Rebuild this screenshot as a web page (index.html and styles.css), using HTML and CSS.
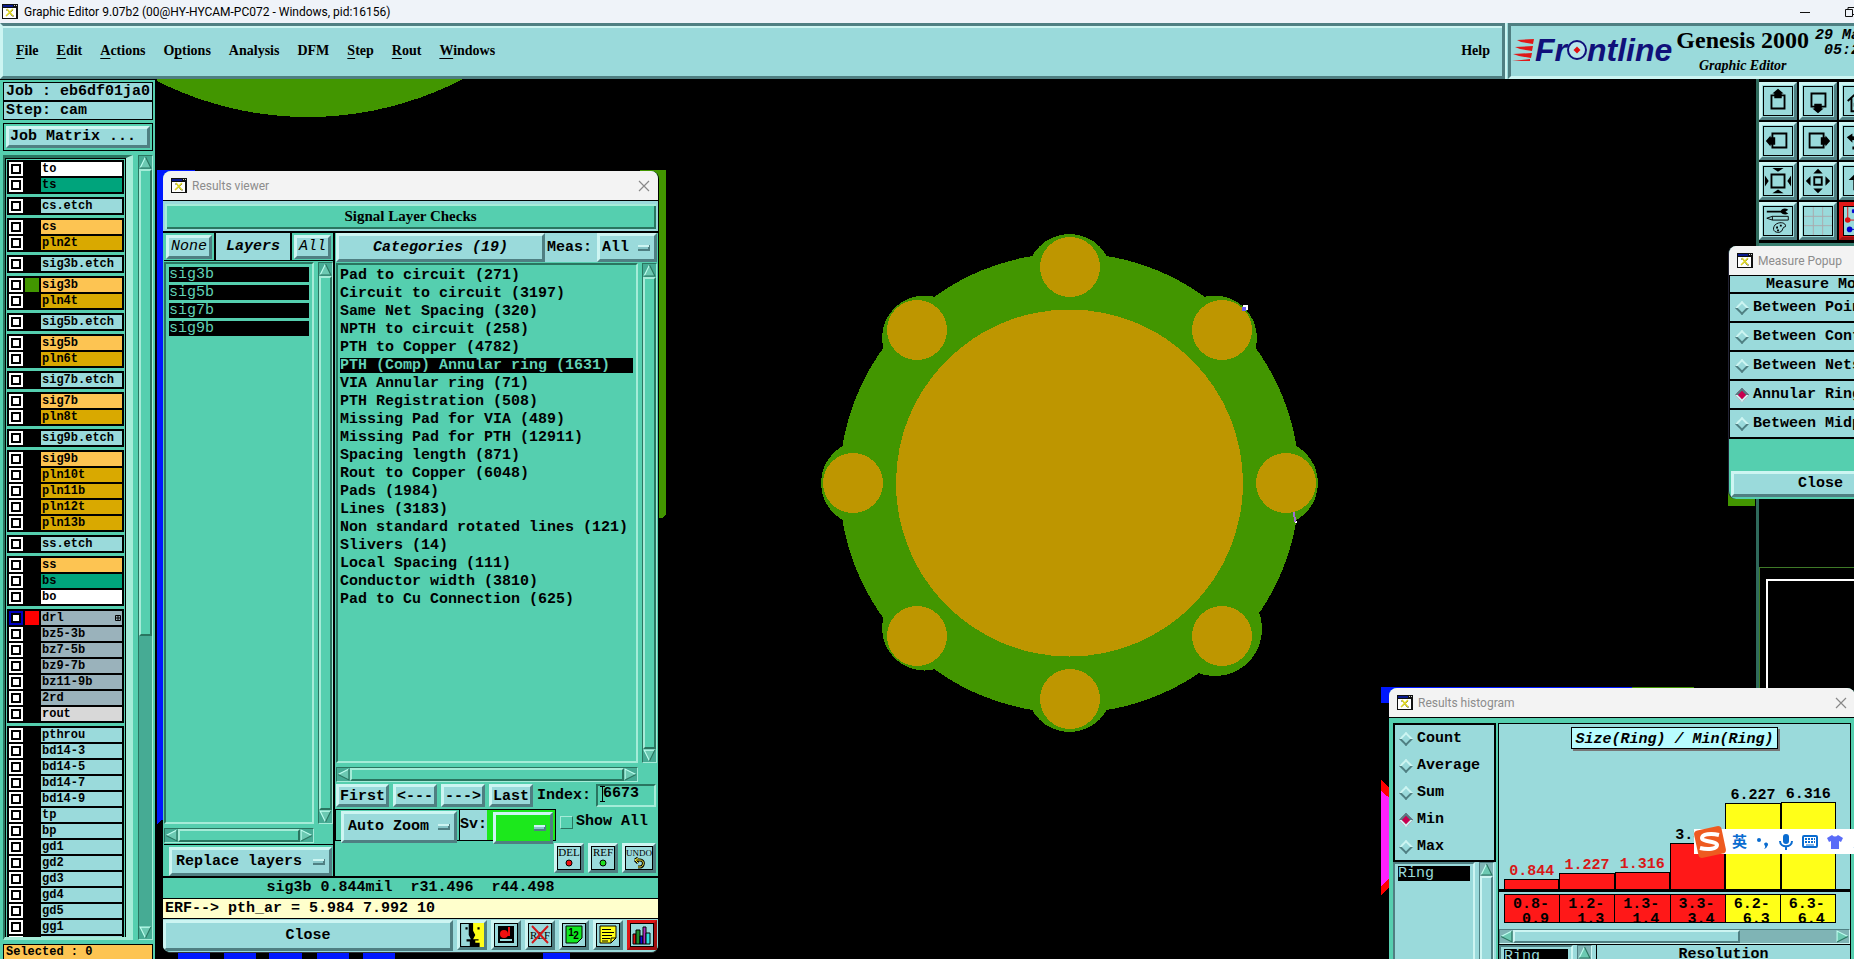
FILE: index.html
```html
<!DOCTYPE html>
<html lang="en">
<head>
<meta charset="utf-8">
<title>Graphic Editor 9.07b2</title>
<link rel="stylesheet" href="styles.css">
</head>
<body>
<svg width="0" height="0" class="defs" aria-hidden="true">
  <symbol id="app" viewBox="0 0 16 16"><path fill="#111" d="M0 0h16v15H0z"/><path fill="#0a1a8c" d="M1 1h10v2H1z"/><path fill="#fff" d="M1 4h13v10H1z"/><path fill="#ccc" d="M12 1h1v1h-1zM14 1h1v1h-1z"/><path d="M4 6h2l4 6h2M11 6L4 12" fill="none" stroke="#555" stroke-width="1"/><path d="M5 5l6 7M11 5L4 12" fill="none" stroke="#e0d820" stroke-width="1.5"/></symbol>
  <symbol id="close" viewBox="0 0 12 12"><path d="M1 1l10 10M11 1L1 11" fill="none" stroke="#888" stroke-width="1.2"/></symbol>
  <symbol id="up" viewBox="0 0 12 12"><path class="arr" d="M6 1L11 11H1z"/><path d="M6 1L1 11" stroke="#c0fff0"/><path d="M6 1l5 10H1" fill="none" stroke="#2a7560"/></symbol>
  <symbol id="down" viewBox="0 0 12 12"><path class="arr" d="M6 11L11 1H1z"/><path d="M6 11L1 1H11" fill="none" stroke="#c0fff0"/><path d="M6 11l5-10" stroke="#2a7560"/></symbol>
  <symbol id="left" viewBox="0 0 12 12"><path class="arr" d="M1 6L11 1V11z"/><path d="M1 6L11 1" stroke="#c0fff0"/><path d="M1 6l10 5V1" fill="none" stroke="#2a7560"/></symbol>
  <symbol id="right" viewBox="0 0 12 12"><path class="arr" d="M11 6L1 1V11z"/><path d="M11 6L1 1V11" fill="none" stroke="#c0fff0"/><path d="M11 6L1 11" stroke="#2a7560"/></symbol>
</svg>

<header class="titlebar">
  <svg class="appicon"><use href="#app"/></svg>
  <h1>Graphic Editor 9.07b2 (00@HY-HYCAM-PC072 - Windows, pid:16156)</h1>
  <button class="sys" aria-label="Minimize"><svg width="12" height="12"><path d="M1 6.500h10" stroke="#111"/></svg></button>
  <button class="sys restore" aria-label="Restore"><svg width="12" height="12"><path d="M1.500 3.500h7v7h-7zM4 3V1.500h7v7H9" fill="none" stroke="#111"/></svg></button>
</header>

<div class="top">
  <nav class="menubar">
    <button><u>F</u>ile</button><button><u>E</u>dit</button><button><u>A</u>ctions</button><button>O<u>p</u>tions</button><button>Analysis</button><button>DFM</button><button><u>S</u>tep</button><button><u>R</u>out</button><button><u>W</u>indows</button>
    <button class="help">Help</button>
  </nav>
  <section class="brand">
    <div class="logo">
      <svg width="23" height="24"><path fill="#e01818" d="M5 2l17-1-1 5-12-2zM3 9l18-1-1 5L8 11zM1 16l19-1-1 5L7 18zM0 23l18-2v2z"/></svg><span>Fr</span><svg width="20" height="20"><circle cx="10" cy="10" r="9" fill="#b8e6ea" stroke="#10107a" stroke-width="2"/><path d="M10 6.500l3.500 3.500-3.500 3.500L6.500 10z" fill="#e01010"/></svg><span>ntline</span>
    </div>
    <div class="product"><strong>Genesis 2000</strong><em>Graphic Editor</em></div>
    <div class="clock">29 Mar<br>05:24</div>
  </section>
</div>

<main class="work">
  <aside class="sidebar">
    <div class="info">Job : eb6df01ja0</div>
    <div class="info">Step: cam</div>
    <div class="matrix"><button class="btn">Job Matrix ...</button></div>
    <div class="layerbox">
      <div class="well">
        <div class="stack">
          <div class="group">
            <label class="layer white"><input type="checkbox"><i></i><span>to</span></label>
            <label class="layer green"><input type="checkbox"><i></i><span>ts</span></label>
          </div>
          <div class="group"><label class="layer"><input type="checkbox"><i></i><span>cs.etch</span></label></div>
          <div class="group">
            <label class="layer amber"><input type="checkbox"><i></i><span>cs</span></label>
            <label class="layer gold"><input type="checkbox"><i></i><span>pln2t</span></label>
          </div>
          <div class="group"><label class="layer"><input type="checkbox"><i></i><span>sig3b.etch</span></label></div>
          <div class="group">
            <label class="layer amber"><input type="checkbox"><i class="shown"></i><span>sig3b</span></label>
            <label class="layer gold"><input type="checkbox"><i></i><span>pln4t</span></label>
          </div>
          <div class="group"><label class="layer"><input type="checkbox"><i></i><span>sig5b.etch</span></label></div>
          <div class="group">
            <label class="layer amber"><input type="checkbox"><i></i><span>sig5b</span></label>
            <label class="layer gold"><input type="checkbox"><i></i><span>pln6t</span></label>
          </div>
          <div class="group"><label class="layer"><input type="checkbox"><i></i><span>sig7b.etch</span></label></div>
          <div class="group">
            <label class="layer amber"><input type="checkbox"><i></i><span>sig7b</span></label>
            <label class="layer gold"><input type="checkbox"><i></i><span>pln8t</span></label>
          </div>
          <div class="group"><label class="layer"><input type="checkbox"><i></i><span>sig9b.etch</span></label></div>
          <div class="group">
            <label class="layer amber"><input type="checkbox"><i></i><span>sig9b</span></label>
            <label class="layer gold"><input type="checkbox"><i></i><span>pln10t</span></label>
            <label class="layer gold"><input type="checkbox"><i></i><span>pln11b</span></label>
            <label class="layer gold"><input type="checkbox"><i></i><span>pln12t</span></label>
            <label class="layer gold"><input type="checkbox"><i></i><span>pln13b</span></label>
          </div>
          <div class="group"><label class="layer"><input type="checkbox"><i></i><span>ss.etch</span></label></div>
          <div class="group">
            <label class="layer amber"><input type="checkbox"><i></i><span>ss</span></label>
            <label class="layer green"><input type="checkbox"><i></i><span>bs</span></label>
            <label class="layer white"><input type="checkbox"><i></i><span>bo</span></label>
          </div>
          <div class="group">
            <label class="layer slate work-layer"><input type="checkbox"><i class="drill"></i><span>drl<svg width="6" height="6"><path d="M.5.5h5v5h-5zM3 0v6M0 3h6" fill="none" stroke="#000"/></svg></span></label>
            <label class="layer slate"><input type="checkbox"><i></i><span>bz5-3b</span></label>
            <label class="layer slate"><input type="checkbox"><i></i><span>bz7-5b</span></label>
            <label class="layer slate"><input type="checkbox"><i></i><span>bz9-7b</span></label>
            <label class="layer slate"><input type="checkbox"><i></i><span>bz11-9b</span></label>
            <label class="layer slate"><input type="checkbox"><i></i><span>2rd</span></label>
            <label class="layer grey"><input type="checkbox"><i></i><span>rout</span></label>
          </div>
          <div class="group">
            <label class="layer"><input type="checkbox"><i></i><span>pthrou</span></label>
            <label class="layer"><input type="checkbox"><i></i><span>bd14-3</span></label>
            <label class="layer"><input type="checkbox"><i></i><span>bd14-5</span></label>
            <label class="layer"><input type="checkbox"><i></i><span>bd14-7</span></label>
            <label class="layer"><input type="checkbox"><i></i><span>bd14-9</span></label>
            <label class="layer"><input type="checkbox"><i></i><span>tp</span></label>
            <label class="layer"><input type="checkbox"><i></i><span>bp</span></label>
            <label class="layer"><input type="checkbox"><i></i><span>gd1</span></label>
            <label class="layer"><input type="checkbox"><i></i><span>gd2</span></label>
            <label class="layer"><input type="checkbox"><i></i><span>gd3</span></label>
            <label class="layer"><input type="checkbox"><i></i><span>gd4</span></label>
            <label class="layer"><input type="checkbox"><i></i><span>gd5</span></label>
            <label class="layer"><input type="checkbox"><i></i><span>gg1</span></label>
            <label class="layer"><input type="checkbox"><i></i><span>gg2</span></label>
          </div>
        </div>
      </div>
      <div class="vscroll partial"><svg><use href="#up"/></svg><b></b><s></s><svg><use href="#down"/></svg></div>
    </div>
    <div class="selected">Selected : 0</div>
  </aside>

  <section class="canvas" aria-label="Board view">
    <svg width="1599" height="880" shape-rendering="crispEdges">
      <g transform="translate(-157 -79)">
        <circle cx="308" cy="-218" r="335" fill="#429600"/>
        <path fill="#0018ff" d="M157 170h38v650h-34l-4 4zM178 950h32v9h-32zM224 950h32v9h-32zM269 950h33v9h-33zM317 950h32v9h-32zM363 950h32v9h-32zM543 950h27v9h-27zM1381 687h251v16h-251z"/>
        <path fill="#429600" d="M640 170h26v344l-4 4h-22zM1728 480h27v26h-27zM1632 687h62v5h-62z"/>
        <path fill="#f00" d="M1381 780l12 12v91l-12 12z"/><path fill="#ff20ff" d="M1381 791l12 10v73l-12 12z"/>
        <g fill="#429600">
          <circle cx="1069.500" cy="483" r="230"/>
          <circle cx="1069.500" cy="276.500" r="42.500"/><circle cx="1069.500" cy="689.500" r="42.500"/><circle cx="863.500" cy="483" r="42.500"/><circle cx="1275.500" cy="483" r="42.500"/>
          <circle cx="924.500" cy="338" r="42.500"/><circle cx="1214.500" cy="338" r="42.500"/><circle cx="924.500" cy="628" r="42.500"/><circle cx="1215" cy="629" r="47"/>
        </g>
        <g fill="#be9600">
          <circle cx="1069.500" cy="483" r="173.500"/>
          <circle cx="1070" cy="267" r="30"/><circle cx="1070" cy="699" r="30"/><circle cx="853" cy="483" r="30"/><circle cx="1286" cy="483" r="30"/>
          <circle cx="917" cy="330" r="30"/><circle cx="1222" cy="330" r="30"/><circle cx="917" cy="636" r="30"/><circle cx="1222" cy="636" r="30"/>
        </g>
        <path d="M1243 305h5v5h-5zM1295 521h2v2h-2z" fill="#fff"/><path d="M1242 307h4v4h-4z" fill="#6a5cf0"/><path d="M1293.500 512l2 10" stroke="#a070d0" stroke-width="2"/>
      </g>
    </svg>
  </section>

  <aside class="tools">
    <div class="toolgrid">
      <button aria-label="Pan up"><svg viewBox="0 0 30 30"><path d="M8 9h14v14H8z" class="ln"/><path d="M15 2l6 5h-2v5h-8V7H9z"/></svg></button>
      <button aria-label="Pan down"><svg viewBox="0 0 30 30"><path d="M8 7h15v14H8z" class="ln"/><path d="M15 28l6-5h-2v-5h-8v5H9z"/></svg></button>
      <button aria-label="Home"><svg viewBox="0 0 30 30"><path d="M4 15L15 5l11 10M8 12v14h14V12" class="ln"/><path d="M11 17h5v4h-5z" fill="none" stroke="#000"/></svg></button>
      <button aria-label="Pan left"><svg viewBox="0 0 30 30"><path d="M9 7h15v15H9z" class="ln"/><path d="M2 15l5-6v2h5v8H7v2z"/></svg></button>
      <button aria-label="Pan right"><svg viewBox="0 0 30 30"><path d="M6 7h15v15H6z" class="ln"/><path d="M28 15l-5-6v2h-5v8h5v2z"/></svg></button>
      <button aria-label="Previous view"><svg viewBox="0 0 30 30"><path d="M3 11l6-4v3c9 0 12 4 10 14H9v-3h6c1-5-1-7-6-7v3z"/></svg></button>
      <button aria-label="Zoom in"><svg viewBox="0 0 30 30"><path d="M8 8h14v14H8z" class="ln"/><path d="M9 1h12l-6 4zM9 28h12l-6-4zM1 9v12l4-6zM29 9v12l-4-6z"/></svg></button>
      <button aria-label="Zoom out"><svg viewBox="0 0 30 30"><path d="M11 11h8v8h-8z" class="ln"/><path d="M10 7h10l-5-5zM10 23h10l-5 5zM7 10v10l-5-5zM23 10v10l5-5z"/></svg></button>
      <button aria-label="Back"><svg viewBox="0 0 30 30"><path d="M5 14l7-7 7 7h-5v11h-4V14z"/></svg></button>
      <button aria-label="Options"><svg viewBox="0 0 30 30"><path d="M3 4h15c2-3 5-3 8-1l-3 2 3 2c-3 2-6 1-8-1H3z"/><path d="M3 12l6-2h17v4H9zM9 10v4M12 19c5-4 12-2 11 2-4 0-2 5-6 6-6 1-9-3-5-8z" fill="none" stroke="#000"/><path d="M13 21h2v2h-2zM17 19h2v2h-2zM14 24h2v2h-2z"/></svg></button>
      <button aria-label="Grid"><svg viewBox="0 0 30 30"><path d="M10 0v30M20 0v30M0 10h30M0 20h30" stroke="#a9a9ad"/></svg></button>
      <button aria-label="Measure" class="active"><svg viewBox="0 0 30 30"><path d="M4 0v14h26" fill="none" stroke="#e01010"/><circle cx="4" cy="14" r="3" fill="#e01010"/><circle cx="6" cy="24" r="3" fill="#0000d0"/><path d="M9 3h4v3H9zM8 24h22" fill="#0000d0" stroke="#0000d0"/></svg></button>
    </div>
    <div class="panview"><div></div></div>
  </aside>

  <section class="window viewer">
    <div class="wintitle"><svg class="appicon"><use href="#app"/></svg><h2>Results viewer</h2><button aria-label="Close window"><svg width="12" height="12"><use href="#close"/></svg></button></div>
    <div class="heading">Signal Layer Checks</div>
    <div class="cols">
      <div class="layercol">
        <div class="pick"><div><button class="btn it">None</button></div><h3>Layers</h3><div><button class="btn it">All</button></div></div>
        <div class="scrollarea">
          <ul class="list"><li class="on">sig3b</li><li class="on">sig5b</li><li class="on">sig7b</li><li class="on">sig9b</li></ul>
          <div class="vscroll"><svg><use href="#up"/></svg><b></b><svg><use href="#down"/></svg></div>
          <div class="hscroll"><svg><use href="#left"/></svg><b></b><svg><use href="#right"/></svg></div>
        </div>
        <div class="replace"><select class="btn" aria-label="Layer action"><option>Replace layers</option></select></div>
      </div>
      <div class="catcol">
        <div class="cathead"><button class="btn it">Categories (19)</button><label for="meas">Meas:</label><select id="meas" class="btn"><option>All</option></select></div>
        <div class="scrollarea">
          <ul class="list"><li>Pad to circuit (271)</li><li>Circuit to circuit (3197)</li><li>Same Net Spacing (320)</li><li>NPTH to circuit (258)</li><li>PTH to Copper (4782)</li><li class="on">PTH (Comp) Annular ring (1631)</li><li>VIA Annular ring (71)</li><li>PTH Registration (508)</li><li>Missing Pad for VIA (489)</li><li>Missing Pad for PTH (12911)</li><li>Spacing length (871)</li><li>Rout to Copper (6048)</li><li>Pads (1984)</li><li>Lines (3183)</li><li>Non standard rotated lines (121)</li><li>Slivers (14)</li><li>Local Spacing (111)</li><li>Conductor width (3810)</li><li>Pad to Cu Connection (625)</li></ul>
          <div class="vscroll"><svg><use href="#up"/></svg><b></b><svg><use href="#down"/></svg></div>
          <div class="hscroll"><svg><use href="#left"/></svg><b></b><svg><use href="#right"/></svg></div>
        </div>
        <div class="step"><button class="btn">First</button><button class="btn">&lt;---</button><button class="btn">---&gt;</button><button class="btn">Last</button><label for="idx">Index:</label><input id="idx" type="text" value="6673" size="4"><svg class="ibeam" width="7" height="16"><path d="M1 .5h5M1 15.500h5M3.500 1v14" stroke="#000"/></svg></div>
        <div class="zoomrow"><div class="boxed"><select class="btn" aria-label="Zoom mode"><option>Auto Zoom</option></select></div><div class="sv"><label for="sv">Sv:</label><div><select id="sv" class="btn"><option></option></select></div></div><label class="showall"><input type="checkbox">Show All</label></div>
        <div class="acts">
          <button class="btn icon"><svg class="frame" viewBox="0 0 22 22"><text x="11" y="9">DEL</text><circle cx="11" cy="16" r="3" fill="#f01010" stroke="#000"/></svg></button>
          <button class="btn icon"><svg class="frame" viewBox="0 0 22 22"><text x="11" y="9">REF</text><circle cx="11" cy="16" r="3" fill="#20e020" stroke="#000"/></svg></button>
          <button class="btn icon wide"><svg class="frame" viewBox="0 0 26 22"><text x="13" y="9" class="small">UNDO</text><path d="M9 13h5c5 0 4 7 0 7h-2M9 13l3-2M9 13l3 3" fill="none" stroke="#000" stroke-width="3"/><path d="M9 13h5c5 0 4 7 0 7h-2M9 13l3-2M9 13l3 3" fill="none" stroke="#f8f040"/></svg></button>
        </div>
      </div>
    </div>
    <output class="status">sig3b 0.844mil&nbsp; r31.496&nbsp; r44.498</output>
    <output class="erf">ERF--&gt; pth_ar = 5.984 7.992 10</output>
    <div class="closing">
      <button class="btn">Close</button>
      <button class="btn icon" aria-label="Negative view"><svg viewBox="0 0 22 22"><path d="M0 0h22v22H0z"/><path d="M1 1h7v10l2 4H6v2h3v4H1z" fill="#9adada"/><path d="M12 0h10v22h-4v-4h-4v-2h3v-1h-5l2-4-2-4z" fill="#ffff18"/><path d="M5 4h2v2H5zM16 4h2v2h-2z"/></svg></button>
      <button class="btn icon" aria-label="Snapshot"><svg class="frame" viewBox="0 0 22 22"><path d="M3 2h16v17H3z"/><circle cx="9" cy="10" r="4" fill="#f01010"/><path d="M14 3v8h-4" fill="none" stroke="#f01010" stroke-width="2"/><path d="M5 16h12" stroke="#9adada" stroke-width="2"/></svg></button>
      <button class="btn icon" aria-label="Clear reference"><svg class="frame" viewBox="0 0 22 22"><text x="11" y="15">REF</text><path d="M3 2l16 17M19 2L3 19" stroke="#d01818" stroke-width="2"/></svg></button>
      <button class="btn icon" aria-label="Count"><svg class="frame" viewBox="0 0 22 22"><path d="M3 2h16v12l-5 5H3z" fill="#10e820" stroke="#000"/><text x="8" y="12" class="num">1</text><text x="13" y="15" class="num">2</text></svg></button>
      <button class="btn icon" aria-label="Notes"><svg class="frame" viewBox="0 0 22 22"><path d="M3 2h16v12l-5 5H3z" fill="#ffff18" stroke="#000"/><path d="M5 5.500h9M5 8.500h12M5 11.500h10M5 14.500h8M14 19v-5h5M5 17h6" fill="none" stroke="#000"/></svg></button>
      <button class="btn icon active" aria-label="Histogram"><svg class="frame" viewBox="0 0 22 22"><g stroke="#000"><path d="M2 10h3v10H2z" fill="#e01010"/><path d="M5 6h4v14H5z" fill="#209030"/><path d="M9 12h3v8H9z" fill="#1010e0"/><path d="M12 3h3v17h-3z" fill="#b030c0"/><path d="M15 9h4v11h-4z" fill="#30e0e0"/></g></svg></button>
    </div>
  </section>

  <section class="window popup">
    <div class="wintitle"><svg class="appicon"><use href="#app"/></svg><h2>Measure Popup</h2></div>
    <fieldset>
      <legend>Measure Mode</legend>
      <label><input type="radio" name="mm">Between Points</label>
      <label><input type="radio" name="mm">Between Contours</label>
      <label><input type="radio" name="mm">Between Nets</label>
      <label><input type="radio" name="mm" checked>Annular Ring</label>
      <label><input type="radio" name="mm">Between Midpoints</label>
    </fieldset>
    <div class="popclose"><button class="btn">Close</button></div>
  </section>

  <section class="window histo">
    <div class="wintitle"><svg class="appicon"><use href="#app"/></svg><h2>Results histogram</h2><button aria-label="Close window"><svg width="12" height="12"><use href="#close"/></svg></button></div>
    <div class="histobody">
      <div class="histoleft">
        <div class="stats">
          <label><input type="radio" name="st">Count</label><label><input type="radio" name="st">Average</label><label><input type="radio" name="st">Sum</label><label><input type="radio" name="st" checked>Min</label><label><input type="radio" name="st">Max</label>
        </div>
        <div class="ringbox"><ul class="list blue"><li class="on">Ring</li></ul><div class="vscroll blue"><svg><use href="#up"/></svg><b></b></div></div>
      </div>
      <div class="historight">
        <div class="chart">
          <h3>Size(Ring) / Min(Ring)</h3>
          <div class="bars">
            <div class="bar red"><span>0.844</span><b style="height:10px"></b></div>
            <div class="bar red"><span>1.227</span><b style="height:16px"></b></div>
            <div class="bar red"><span>1.316</span><b style="height:17px"></b></div>
            <div class="bar red over"><span>3.334</span><b style="height:46px"></b></div>
            <div class="bar yellow"><span>6.227</span><b style="height:86px"></b></div>
            <div class="bar yellow"><span>6.316</span><b style="height:87px"></b></div>
          </div>
          <div class="ranges"><div>0.8-<br>&nbsp;0.9</div><div>1.2-<br>&nbsp;1.3</div><div>1.3-<br>&nbsp;1.4</div><div>3.3-<br>&nbsp;3.4</div><div class="y">6.2-<br>&nbsp;6.3</div><div class="y">6.3-<br>&nbsp;6.4</div></div>
        </div>
        <div class="hscroll blue"><svg><use href="#left"/></svg><b></b><s></s><svg><use href="#right"/></svg></div>
        <div class="lower"><ul class="list blue"><li class="on">Ring</li></ul><div class="vscroll blue"><svg><use href="#up"/></svg><b></b></div><div class="res">Resolution</div></div>
      </div>
    </div>
  </section>

  <div class="ime">
    <svg class="sogou" width="32" height="32" viewBox="0 0 32 32"><rect x="2" y="2" width="28" height="28" rx="4" fill="#ee5a20" transform="rotate(-12 16 16)"/><path d="M25 9C17 7 8 8 8 12s15 3 15 7-9 5-17 3" fill="none" stroke="#fff" stroke-width="4"/></svg>
    <span>英</span>
    <svg width="14" height="14"><circle cx="3" cy="5" r="2" fill="#0a6cd0"/><path d="M8 9a2 2 0 1 1 4 1q-1 3-4 4 2-2 1-3z" fill="#0a6cd0"/></svg>
    <svg width="14" height="16"><rect x="4" y="0" width="6" height="10" rx="3" fill="#0a6cd0"/><path d="M1 7c0 7 12 7 12 0M7 12v4" fill="none" stroke="#0a6cd0" stroke-width="2"/></svg>
    <svg width="16" height="14"><rect x="1" y="1" width="14" height="11" rx="1" fill="none" stroke="#0a6cd0" stroke-width="2"/><path d="M3 4h10M3 7h10" stroke="#0a6cd0" stroke-width="2" stroke-dasharray="2 1"/><path d="M4 10h8" stroke="#0a6cd0"/></svg>
    <svg width="16" height="16"><path d="M5 1q3 3 6 0l5 3-2 4-2-1v8H4V7L2 8 0 4z" fill="#5a6cf8"/></svg>
    <svg width="12" height="14"><path d="M12 1H7Q3 1 3 4t5 3q4 1 3 4t-9 1" fill="none" stroke="#0a6cd0" stroke-width="2"/></svg>
  </div>
</main>
</body>
</html>
```
FILE: styles.css
```css
:root {
  --sky: #9adadb;
  --sky-lt: #cdf5f2;
  --sky-dk: #4f7f82;
  --teal: #55cfaf;
  --teal-lt: #a5ecd8;
  --teal-dk: #2a7560;
}
* { box-sizing: border-box; }
body {
  margin: 0;
  height: 100vh;
  display: flex;
  flex-direction: column;
  overflow: hidden;
  background: #000;
  color: #000;
  font: bold 15px/18px "Liberation Mono", monospace;
}
button, select, input { font: inherit; color: inherit; margin: 0; padding: 0; border-radius: 0; }
button { background: none; border: 0; white-space: nowrap; }
h1, h2, h3, ul, fieldset { margin: 0; padding: 0; font: inherit; }
ul { list-style: none; }
svg { display: block; flex: none; }
.defs { position: absolute; }
.arr { fill: #6cc9b2; }
.appicon { width: 16px; height: 16px; }

.btn {
  background: var(--sky);
  border: 3px solid;
  border-color: var(--sky-lt) var(--sky-dk) var(--sky-dk) var(--sky-lt);
}
.it { font-style: italic; }
select.btn {
  appearance: none;
  padding: 0 24px 0 4px;
  background-image:
    linear-gradient(var(--sky-lt), var(--sky-lt)),
    linear-gradient(#86c6c8, #86c6c8),
    linear-gradient(var(--sky-dk), var(--sky-dk));
  background-size: 11px 2px, 10px 2px, 12px 6px;
  background-position: right 5px top calc(50% - 2px), right 6px center, right 4px center;
  background-repeat: no-repeat;
}

.titlebar {
  flex: none;
  height: 23px;
  display: flex;
  align-items: center;
  gap: 6px;
  padding-left: 2px;
  background: #eff3f9;
  overflow: hidden;
}
.titlebar h1 { flex: 1; font: 12px/20px Roboto, sans-serif; }
.sys { width: 39px; flex: none; }
.restore { width: 12px; margin-right: -2px; }

.top { flex: none; display: flex; height: 56px; background: var(--sky); }
.menubar {
  flex: 1;
  display: flex;
  align-items: center;
  gap: 18px;
  padding: 0 12px 0 13px;
  border: 3px solid;
  border-color: var(--sky-dk) var(--sky-dk) var(--sky-dk) var(--sky-lt);
  box-shadow: inset 0 2px var(--sky-lt), 2px 0 var(--sky-lt);
  font: bold 14px/18px "Liberation Serif", serif;
}
.menubar u { text-underline-offset: 3px; }
.help { margin-left: auto; }
.brand {
  flex: none;
  width: 346px;
  margin-left: 3px;
  display: flex;
  overflow: hidden;
  border-left: 3px solid var(--sky-dk);
  border-top: 3px solid var(--sky-dk);
  border-bottom: 3px solid var(--sky-lt);
}
.logo {
  display: flex;
  align-items: center;
  height: 48px;
  font: italic bold 32px/32px "Liberation Sans", sans-serif;
  color: #10107a;
  padding-left: 1px;
}
.product { display: flex; flex-direction: column; align-items: center; padding-left: 4px; white-space: nowrap; }
.product strong { font: bold 24px/28px "Liberation Serif", serif; }
.product em { font: italic bold 14px/24px "Liberation Serif", serif; }
.clock { flex: none; font-style: italic; line-height: 15px; text-align: right; padding: 2px 0 0 6px; }

.work { flex: 1; min-height: 0; display: flex; }
.sidebar {
  flex: none;
  width: 155px;
  display: flex;
  flex-direction: column;
  padding: 2px 2px 0 3px;
  background: var(--teal);
  border-top: 1px solid #000;
}
.info { height: 19px; border: 1px solid #000; background: var(--sky); padding-left: 2px; line-height: 17px; white-space: nowrap; }
.matrix { border: 1px solid #000; margin-top: 3px; padding: 2px; display: grid; }
.matrix .btn { text-align: left; line-height: 16px; padding-left: 1px; }
.layerbox { flex: 1; min-height: 0; display: flex; gap: 5px; margin-top: 4px; }
.well {
  flex: 1;
  overflow: hidden;
  border: 4px solid;
  border-width: 3px 7px 3px 2px;
  border-color: var(--teal-dk) var(--teal-lt) var(--teal-lt) var(--teal-dk);
}
.stack { display: flex; flex-direction: column; gap: 3px; border: 1px solid #000; border-bottom: 0; padding: 1px 1px 0; }
.group { background: #000; padding: 2px; display: grid; gap: 2px; }
.layer { display: grid; grid-template-columns: 14px 14px 1fr; gap: 2px; height: 14px; }
.layer input, .showall input { appearance: none; }
.layer input { width: 14px; height: 14px; background: #fff; border: 2px solid #fff; box-shadow: inset 0 0 0 2px #000; }
.work-layer input { border-color: #0000c0; }
.layer span { display: flex; justify-content: space-between; align-items: center; padding: 0 1px; font-size: 12px; line-height: 14px; background: var(--sky); }
.layer.white span { background: #fff; }
.layer.green span { background: #00a47c; }
.layer.amber span { background: #fdc452; }
.layer.gold span { background: #d9a900; }
.layer.slate span { background: #9ab2bb; }
.layer.grey span { background: #d8d8d8; }
.shown { background: #429600; }
.drill { background: #f00; }
.selected { height: 15px; margin-top: 4px; border: 1px solid #000; border-bottom: 0; background: #fdc452; font-size: 12px; line-height: 14px; padding-left: 2px; }

.vscroll, .hscroll { display: flex; background: #46ab94; border: 1px solid; border-color: var(--teal-dk) var(--teal-lt) var(--teal-lt) var(--teal-dk); }
.vscroll { width: 15px; flex: none; flex-direction: column; }
.hscroll { height: 15px; flex: none; }
.vscroll svg, .hscroll svg { width: 13px; height: 13px; }
.vscroll b, .hscroll b { flex: 1; background: var(--teal); border: 2px solid; border-color: var(--teal-lt) var(--teal-dk) var(--teal-dk) var(--teal-lt); }
.partial b { flex: 468; }
.partial s { flex: 293; }

.canvas { flex: 1; min-width: 0; margin-left: 2px; overflow: hidden; }
.tools { flex: none; width: 98px; border-left: 3px solid #2f6a5c; overflow: hidden; display: flex; flex-direction: column; }
.toolgrid { display: grid; grid-template-columns: repeat(3, 38px); gap: 2px; padding-top: 3px; border-bottom: 3px solid #3a8072; padding-bottom: 3px; }
.toolgrid button { height: 38px; padding: 1px; background: var(--sky); border: 3px solid; border-color: var(--sky-lt) var(--sky-dk) var(--sky-dk) var(--sky-lt); }
.toolgrid svg { width: 30px; height: 30px; border: 1px solid #000; }
.toolgrid .active, .icon.active { background: #e01818; border-color: #e01818 #a01010 #a01010 #e01818; }
.toolgrid .active svg { background: var(--sky); }
.ln { fill: none; stroke: #000; stroke-width: 2; }
.panview { flex: 1; margin-top: 321px; border-top: 1px solid #3f7a28; border-left: 1px solid #3f7a28; padding: 11px 0 0 6px; }
.panview div { height: 100%; border: 2px solid #fff; border-width: 2px 0 0 2px; }

.window { position: absolute; display: flex; flex-direction: column; border-radius: 8px; overflow: hidden; background: var(--teal); }
.wintitle { flex: none; height: 30px; display: flex; align-items: center; gap: 5px; padding: 0 8px; background: #f3f3f3; border-bottom: 1px solid #000; }
.wintitle h2 { flex: 1; font: 12px/18px Roboto, sans-serif; color: #8c8c8c; white-space: nowrap; }

.viewer { left: 163px; top: 171px; width: 496px; height: 782px; border-bottom: 1px solid #333; border-right: 1px solid #000; }
.heading { flex: none; height: 30px; border: 3px solid var(--sky); border-width: 3px 2px 2px 2px; box-shadow: inset 2px 2px var(--teal-lt), inset -2px -2px var(--teal-dk); text-align: center; font: bold 15px/24px "Liberation Serif", serif; }
.cols { flex: 1; min-height: 0; display: flex; gap: 2px; background: #000; border: 1px solid #000; border-width: 2px 0; }
.layercol, .catcol { background: var(--teal); display: flex; flex-direction: column; padding-left: 1px; min-width: 0; }
.layercol { flex: none; width: 170px; }
.catcol { flex: 1; padding-right: 1px; }
.pick { display: flex; height: 28px; border-bottom: 1px solid #000; }
.pick > div { padding: 2px; display: grid; }
.pick .btn { padding: 0 2px; font-weight: normal; }
.pick h3 { flex: 1; text-align: center; background: var(--sky); border: 1px solid #000; border-width: 0 2px; font-style: italic; line-height: 27px; }
.scrollarea { flex: 1; min-height: 0; display: grid; grid-template: 1fr 15px / 1fr 15px; gap: 4px; padding: 1px 0; }
.list { border: 2px solid; border-color: var(--teal-dk) var(--teal-lt) var(--teal-lt) var(--teal-dk); padding: 3px; display: flex; flex-direction: column; gap: 3px; min-width: 0; }
.list li { line-height: 15px; height: 15px; white-space: nowrap; }
.list .on { background: #000; color: #62d2b6; }
.catcol .list { padding-left: 2px; }
.layercol .list .on { font-weight: normal; }
.replace { border-top: 1px solid #000; padding: 2px 1px 0 5px; height: 32px; display: grid; }

.cathead { display: flex; height: 29px; background: var(--sky); }
.cathead .btn.it { flex: 1; margin-right: 2px; }
.cathead select.btn { width: 60px; margin-left: 5px; padding: 0 18px 0 2px; }
.cathead label { line-height: 29px; }
.step { display: flex; gap: 4px; height: 26px; padding: 1px 1px 2px 0; line-height: 20px; position: relative; }
.step .btn { padding: 0 1px; }
.step label { line-height: 24px; }
.step input { min-width: 0; flex: 1; margin-left: 1px; padding: 0 0 3px 5px; background: none; border: 2px solid; border-color: var(--teal-dk) var(--teal-lt) var(--teal-lt) var(--teal-dk); }
.ibeam { position: absolute; right: 51px; top: 3px; }
.zoomrow { display: flex; height: 32px; line-height: 26px; margin-left: -1px; }
.boxed { border: 1px solid #000; padding: 1px 2px 1px 5px; display: grid; }
.sv { display: flex; border: 1px solid #000; border-left: 0; background: var(--sky); }
.sv label { line-height: 30px; }
.sv div { background: #1ce81c; padding: 2px 2px 2px 6px; display: grid; }
.sv select.btn { width: 60px; background-color: #1ce81c; }
.showall { display: flex; gap: 3px; padding-left: 4px; }
.showall input { width: 13px; height: 13px; margin-top: 7px; border: 1px solid; border-color: var(--teal-lt) var(--teal-dk) var(--teal-dk) var(--teal-lt); }
.acts { display: flex; justify-content: flex-end; gap: 4px; padding: 2px 1px 3px; }
.icon { flex: none; width: 30px; height: 30px; display: grid; place-items: center; }
.icon svg { width: 24px; height: 24px; }
.frame { border: 1px solid #000; background: var(--sky); }
.icon.wide { width: 34px; }
.icon.wide svg { width: 28px; }
.icon text { font: 11px "Liberation Serif", serif; text-anchor: middle; }
.icon .small { font-size: 9px; }
.icon .num { font: bold 10px "Liberation Sans", sans-serif; }
.status { flex: none; height: 20px; line-height: 20px; text-align: center; }
.erf { flex: none; height: 21px; line-height: 20px; background: #ffffcc; border: 1px solid #000; border-width: 1px 0; padding-left: 2px; }
.closing { flex: none; display: flex; gap: 4px; height: 33px; padding: 1px 1px 1px 0; background: var(--sky); }
.closing > .btn:first-child { flex: 1; }

.popup { left: 1728px; top: 246px; width: 182px; border-left: 1px solid #223; }
fieldset { border: 0; min-width: 0; display: grid; gap: 2px; background: #000; padding: 0 0 2px 1px; }
legend { padding: 0; float: left; width: 100%; height: 16px; line-height: 18px; background: var(--sky); text-align: center; }
fieldset label { height: 27px; line-height: 27px; background: var(--sky); }
fieldset label, .stats label { display: flex; align-items: center; gap: 4px; padding-left: 5px; white-space: nowrap; }
input[type="radio"] {
  appearance: none;
  flex: none;
  width: 10px;
  height: 10px;
  margin: 0 2px;
  transform: rotate(45deg);
  border: 2px solid;
  border-color: var(--sky-lt) var(--sky-dk) var(--sky-dk) var(--sky-lt);
}
input[type="radio"]:checked { background: #c80050; border-color: var(--sky-dk) var(--sky-lt) var(--sky-lt) var(--sky-dk); }
.popclose { padding: 32px 0 2px 2px; display: grid; }
.popclose .btn { height: 26px; }

.histo { left: 1389px; top: 688px; width: 466px; height: 300px; }
.histobody { flex: 1; display: flex; gap: 2px; padding: 5px 4px 0; }
.histoleft { flex: none; width: 103px; display: flex; flex-direction: column; background: var(--sky); }
.stats { border: 2px solid #000; }
.stats label { height: 27px; padding-left: 4px; }
.ringbox { flex: 1; display: flex; gap: 4px; padding-right: 2px; }
.ringbox .list { flex: 1; }
.list.blue .on { color: #9adadb; font-weight: normal; }
.list.blue { border-color: var(--sky-dk) var(--sky-lt) var(--sky-lt) var(--sky-dk); padding-top: 2px; }
.vscroll.blue, .hscroll.blue { background: #7fb4b5; border-color: var(--sky-dk) var(--sky-lt) var(--sky-lt) var(--sky-dk); }
.blue b { background: var(--sky); border-color: var(--sky-lt) var(--sky-dk) var(--sky-dk) var(--sky-lt); }
.historight { flex: 1; min-width: 0; display: flex; flex-direction: column; background: var(--sky); border: 1px solid #000; }
.chart { height: 205px; display: flex; flex-direction: column; }
.chart h3 { align-self: center; margin: 3px 0 0; height: 22px; line-height: 24px; padding: 0 3px; background: #b8fdff; border: 1px solid #000; box-shadow: 2px 2px #777; font-style: italic; }
.bars { flex: 1; display: flex; align-items: flex-end; padding: 0 14px 0 5px; border-bottom: 3px solid #000; }
.bar { flex: 1; display: flex; flex-direction: column; align-items: center; line-height: 15px; }
.bar b { width: 100%; border: 1px solid #000; border-bottom: 0; background: #ff1818; }
.bar.red span { color: #d81818; }
.bar.red.over span { color: #000; }
.bar.yellow b, .ranges .y { background: #ffff18; }
.ranges { flex: none; display: flex; height: 29px; margin: 2px 14px 6px 5px; line-height: 15px; }
.ranges div { flex: 1; border: 1px solid #000; border-right-width: 0; background: #ff1818; padding: 2px 0 0 8px; }
.ranges div:last-child { border-right-width: 1px; }
.historight .hscroll b { flex: 226; }
.historight .hscroll s { flex: 98; }
.lower { flex: 1; display: flex; gap: 4px; border-top: 1px solid #000; }
.lower .list { width: 74px; }
.lower .res { flex: 1; border-left: 1px solid #000; text-align: center; line-height: 20px; }

.ime { position: absolute; left: 1694px; top: 829px; height: 25px; width: 190px; display: flex; align-items: center; gap: 9px; background: #fff; color: #0a6cd0; font: bold 15px/20px "Liberation Sans", "Noto Sans CJK SC", sans-serif; }
.sogou { margin-right: -3px; }
```
